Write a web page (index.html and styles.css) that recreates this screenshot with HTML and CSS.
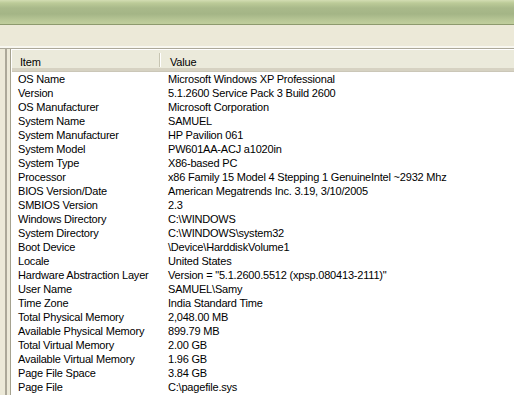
FILE: index.html
```html
<!DOCTYPE html>
<html>
<head>
<meta charset="utf-8">
<link rel="stylesheet" href="styles.css">
</head>
<body>
<div class="window">
  <div class="titlebar"></div>
  <div class="toolbar"></div>
  <div class="sep"></div>
  <div class="main">
    <div class="tree"></div>
    <div class="list">
      <div class="header">
        <div class="hcell c1">Item</div>
        <div class="hcell c2">Value</div>
      </div>
      <div class="rows">
        <div class="row"><span class="c1">OS Name</span><span class="c2">Microsoft Windows XP Professional</span></div>
        <div class="row"><span class="c1">Version</span><span class="c2">5.1.2600 Service Pack 3 Build 2600</span></div>
        <div class="row"><span class="c1">OS Manufacturer</span><span class="c2">Microsoft Corporation</span></div>
        <div class="row"><span class="c1">System Name</span><span class="c2">SAMUEL</span></div>
        <div class="row"><span class="c1">System Manufacturer</span><span class="c2">HP Pavilion 061</span></div>
        <div class="row"><span class="c1">System Model</span><span class="c2">PW601AA-ACJ a1020in</span></div>
        <div class="row"><span class="c1">System Type</span><span class="c2">X86-based PC</span></div>
        <div class="row"><span class="c1">Processor</span><span class="c2">x86 Family 15 Model 4 Stepping 1 GenuineIntel ~2932 Mhz</span></div>
        <div class="row"><span class="c1">BIOS Version/Date</span><span class="c2">American Megatrends Inc. 3.19, 3/10/2005</span></div>
        <div class="row"><span class="c1">SMBIOS Version</span><span class="c2">2.3</span></div>
        <div class="row"><span class="c1">Windows Directory</span><span class="c2">C:\WINDOWS</span></div>
        <div class="row"><span class="c1">System Directory</span><span class="c2">C:\WINDOWS\system32</span></div>
        <div class="row"><span class="c1">Boot Device</span><span class="c2">\Device\HarddiskVolume1</span></div>
        <div class="row"><span class="c1">Locale</span><span class="c2">United States</span></div>
        <div class="row"><span class="c1">Hardware Abstraction Layer</span><span class="c2">Version = "5.1.2600.5512 (xpsp.080413-2111)"</span></div>
        <div class="row"><span class="c1">User Name</span><span class="c2">SAMUEL\Samy</span></div>
        <div class="row"><span class="c1">Time Zone</span><span class="c2">India Standard Time</span></div>
        <div class="row"><span class="c1">Total Physical Memory</span><span class="c2">2,048.00 MB</span></div>
        <div class="row"><span class="c1">Available Physical Memory</span><span class="c2">899.79 MB</span></div>
        <div class="row"><span class="c1">Total Virtual Memory</span><span class="c2">2.00 GB</span></div>
        <div class="row"><span class="c1">Available Virtual Memory</span><span class="c2">1.96 GB</span></div>
        <div class="row"><span class="c1">Page File Space</span><span class="c2">3.84 GB</span></div>
        <div class="row"><span class="c1">Page File</span><span class="c2">C:\pagefile.sys</span></div>
      </div>
    </div>
  </div>
</div>
</body>
</html>
```
FILE: styles.css
```css
html, body {
  margin: 0;
  padding: 0;
  width: 514px;
  height: 395px;
  overflow: hidden;
  background: #ece9d8;
}
.window {
  width: 514px;
  height: 395px;
  display: flex;
  flex-direction: column;
  font-family: "Liberation Sans", Arial, sans-serif;
  font-size: 11px;
  letter-spacing: -0.2px;
  color: #000;
}
.titlebar {
  height: 24px;
  flex: none;
  background: linear-gradient(to bottom, #d3ddb3 0px, #bccb98 3px, #a9b98a 8px, #a4b586 14px, #b7c695 20px, #bfcd9c 23px);
  border-bottom: 1px solid #8d9a6e;
}
.toolbar {
  height: 21px;
  flex: none;
  background: #ece9d8;
}
.sep {
  height: 2px;
  flex: none;
  background: #f8f7f0;
  border-bottom: 1px solid #aca899;
}
.main {
  flex: 1;
  display: flex;
  gap: 3px;
  min-height: 0;
}
.tree {
  width: 5px;
  flex: none;
  background: #ece9d8;
  border-right: 2px solid #aca899;
}
.list {
  flex: 1;
  background: #fff;
  border-left: 1px solid #a5a28f;
  display: flex;
  flex-direction: column;
  padding-left: 1px;
}
.header {
  height: 18px;
  flex: none;
  display: flex;
  background: #ebeadb;
  border-top: 1px solid #ffffff;
  border-bottom: 3px solid #d6d2c2;
  box-shadow: 0 1px 0 #cbc7b8;
  margin-bottom: 1px;
}
.hcell {
  box-sizing: border-box;
  line-height: 14px;
  margin-top: 3px;
  padding-top: 2px;
}
.hcell.c1 {
  width: 148px;
  padding-left: 8px;
  border-right: 1px solid #c7c5b2;
  box-shadow: 1px 0 0 #fff;
  margin-bottom: 1px;
}
.hcell.c2 {
  padding-left: 10px;
}
.row {
  height: 14px;
  line-height: 14px;
  display: flex;
  white-space: nowrap;
}
.row .c1 {
  width: 150px;
  padding-left: 6px;
  flex: none;
}
```
